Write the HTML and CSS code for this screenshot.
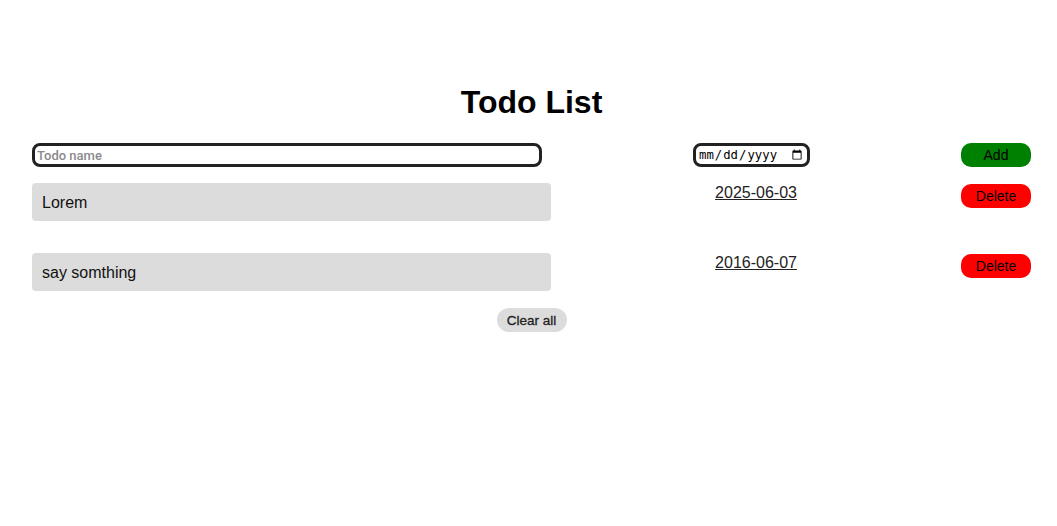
FILE: index.html
```html
<!DOCTYPE html>
<html>
<head>
<meta charset="utf-8">
<link rel="stylesheet" href="styles.css">
</head>
<body>
<div class="app">
  <h1 class="title">Todo List</h1>
  <div class="entry">
    <input class="name-input" type="text" placeholder="Todo name">
    <div class="date-cell"><input class="date-input" type="date"></div>
    <button class="btn add">Add</button>
  </div>
  <div class="list">
    <div class="row">
      <div class="item">Lorem</div>
      <div class="date"><span>2025-06-03</span></div>
      <button class="btn delete">Delete</button>
    </div>
    <div class="row">
      <div class="item">say somthing</div>
      <div class="date"><span>2016-06-07</span></div>
      <button class="btn delete">Delete</button>
    </div>
  </div>
  <div class="footer"><button class="clear">Clear all</button></div>
</div>
</body>
</html>
```
FILE: styles.css
```css
html, body { margin: 0; padding: 0; background: #fff; }
body { font-family: "Liberation Sans", Arial, sans-serif; color: #000; }
.app { padding: 84px 26px 0 32px; }
.title { margin: 0; text-align: center; font-size: 32px; font-weight: bold; line-height: 37px; }
.entry { display: grid; grid-template-columns: 510px 1fr 70px; align-items: center; margin-top: 22px; height: 24px; }
.name-input { box-sizing: border-box; width: 510px; height: 24px; border: 3px solid #222; border-radius: 8px; padding: 0 2px; font-family: Roboto, "Liberation Sans", sans-serif; font-size: 13px; outline: none; }
.name-input::placeholder { color: #8a8a8a; font-weight: 500; }
.date-cell { display: flex; justify-content: center; }
.date-input { box-sizing: border-box; width: 117px; height: 24px; border: 3px solid #222; border-radius: 8px; padding: 0 2px; font-family: "DejaVu Sans Mono", monospace; font-size: 12.3px; }
.btn { box-sizing: border-box; width: 70px; height: 24px; border: none; border-radius: 10px; font-family: "Liberation Sans", Arial, sans-serif; font-size: 14px; color: #000; padding: 0; }
.add { background: #008000; }
.delete { background: #ff0000; }
.list { display: flex; flex-direction: column; gap: 32px; margin-top: 16px; }
.row { display: grid; grid-template-columns: 519px 1fr 70px; align-items: start; }
.item { box-sizing: border-box; height: 38px; background: #dcdcdc; border-radius: 4px; padding: 1px 0 0 10px; font-size: 16px; line-height: 38px; color: #111; }
.date { display: flex; justify-content: center; font-size: 16px; line-height: 18px; padding-top: 1px; }
.date span { text-decoration: underline; color: #222; }
.row .delete { margin-top: 1px; }
.footer { display: flex; justify-content: center; margin-top: 17px; }
.clear { box-sizing: border-box; width: 70px; height: 24px; border: none; border-radius: 12px; background: #dcdcdc; font-family: "Liberation Sans", Arial, sans-serif; font-size: 13.5px; -webkit-text-stroke: 0.3px #222; color: #222; padding: 0; }
```
